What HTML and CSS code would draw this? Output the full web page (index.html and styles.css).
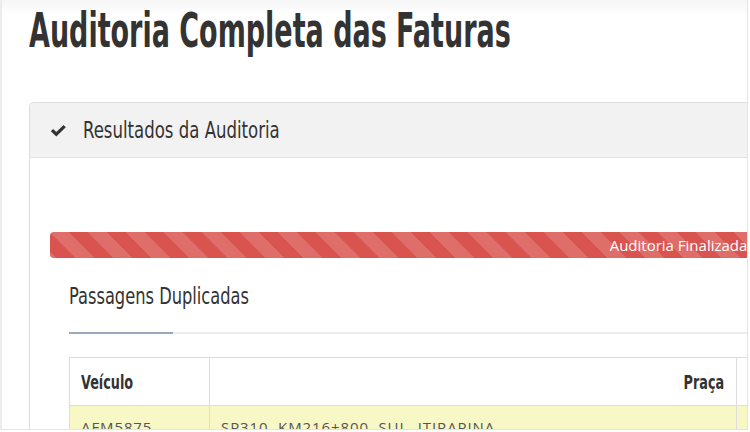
FILE: index.html
```html
<!DOCTYPE html>
<html lang="pt">
<head>
<meta charset="utf-8">
<title>Auditoria Completa das Faturas</title>
<link rel="stylesheet" href="styles.css">
</head>
<body>
<div class="frame">
  <div class="page">
    <h1 class="title"><span class="squeeze sq-title">Auditoria Completa das Faturas</span></h1>
    <div class="panel">
      <div class="panel-heading">
        <svg class="check" width="17" height="13" viewBox="0 0 17 13"><path d="M0.8 7.2 L3.1 4.9 L6.3 8.1 L13.5 0.9 L15.8 3.2 L6.3 12.6 Z" fill="#333"/></svg>
        <span class="panel-title"><span class="squeeze sq-head">Resultados da Auditoria</span></span>
      </div>
      <div class="panel-body">
        <div class="progress"><div class="progress-bar">Auditoria Finalizada</div></div>
        <div class="section">
          <h3 class="section-title"><span class="squeeze sq-sec">Passagens Duplicadas</span></h3>
          <div class="tabs"><span class="tab-active"></span></div>
          <table class="grid">
            <thead>
              <tr><th class="c-veic"><span class="squeeze sq-th">Veículo</span></th><th class="c-praca"><span class="squeeze sq-th sq-right">Praça</span></th><th class="c-more"></th></tr>
            </thead>
            <tbody>
              <tr class="warn"><td>AFM5875</td><td>SP310, KM216+800, SUL, ITIRAPINA</td><td></td></tr>
            </tbody>
          </table>
        </div>
      </div>
    </div>
  </div>
</div>
</body>
</html>
```
FILE: styles.css
```css
html, body {
  margin: 0;
  padding: 0;
  background: #fff;
  overflow: hidden;
}
.frame {
  width: 745px;
  height: 429px;
  border-left: 2px solid #ececec;
  border-right: 1px solid #e4e4e4;
  border-bottom: 1px solid #e4e4e4;
  overflow: hidden;
  background: linear-gradient(#f6f6f6 0, #ffffff 16px);
}
.page {
  padding-left: 27px;
  width: 1400px;
}
.squeeze {
  display: inline-block;
  transform-origin: left center;
  white-space: nowrap;
}
.sq-right { transform-origin: right center; }
.title {
  margin: 0;
  padding-top: 6px;
  font-family: "DejaVu Sans", sans-serif;
  font-stretch: condensed;
  font-weight: bold;
  font-size: 48px;
  line-height: 48px;
  height: 48px;
  color: #333;
}
.sq-title { transform: scaleX(0.625); }
.panel {
  margin-top: 48px;
  width: 1297px;
  border: 1px solid #dddddd;
  border-radius: 4px;
}
.panel-heading {
  height: 54px;
  background: #f2f2f2;
  border-bottom: 1px solid #e3e3e3;
  border-radius: 4px 4px 0 0;
  display: flex;
  align-items: center;
  padding-left: 20px;
  gap: 16px;
}
.check { display: block; margin-top: 1px; }
.panel-title {
  font-family: "DejaVu Sans", sans-serif;
  font-stretch: condensed;
  font-size: 23px;
  color: #333;
}
.sq-head { transform: scaleX(0.8); }
.panel-body {
  padding: 74px 20px 0 20px;
}
.progress {
  height: 26px;
  border-radius: 4px;
  overflow: hidden;
  background: #f5f5f5;
}
.progress-bar {
  height: 100%;
  background-color: #d9534f;
  background-image: linear-gradient(45deg, rgba(255,255,255,.15) 25%, transparent 25%, transparent 50%, rgba(255,255,255,.15) 50%, rgba(255,255,255,.15) 75%, transparent 75%, transparent);
  background-size: 38px 38px;
  color: #fff;
  font-family: "Open Sans", sans-serif;
  font-size: 15px;
  line-height: 26px;
  text-align: center;
}
.section {
  padding: 0 19px;
}
.section-title {
  margin: 0;
  padding-top: 25px;
  font-family: "DejaVu Sans", sans-serif;
  font-stretch: condensed;
  font-weight: normal;
  font-size: 23px;
  line-height: 26px;
  color: #333;
}
.sq-sec { transform: scaleX(0.786); }
.tabs {
  margin-top: 23px;
  height: 2px;
  background: #ececec;
}
.tab-active {
  display: block;
  width: 104px;
  height: 2px;
  background: #98a9bc;
}
.grid {
  margin-top: 23px;
  border-collapse: collapse;
  width: 1000px;
  font-family: "Open Sans", sans-serif;
  font-size: 15px;
  letter-spacing: 0.9px;
  color: #555;
}
.grid th, .grid td {
  border: 1px solid #dddddd;
  padding: 0 12px 0 11px;
}
.grid th {
  height: 47px;
  font-family: "DejaVu Sans", sans-serif;
  font-stretch: condensed;
  font-weight: bold;
  font-size: 19px;
  letter-spacing: 0;
  color: #333;
  text-align: left;
}
.sq-th { transform: scaleX(0.75); }
.grid th.c-praca { text-align: right; }
.c-veic { width: 116px; }
.c-praca { width: 503px; }
.grid td {
  height: 40px;
  vertical-align: top;
  padding-top: 11px;
  line-height: 20px;
}
.warn td { background: #f8f8c6; }
```
